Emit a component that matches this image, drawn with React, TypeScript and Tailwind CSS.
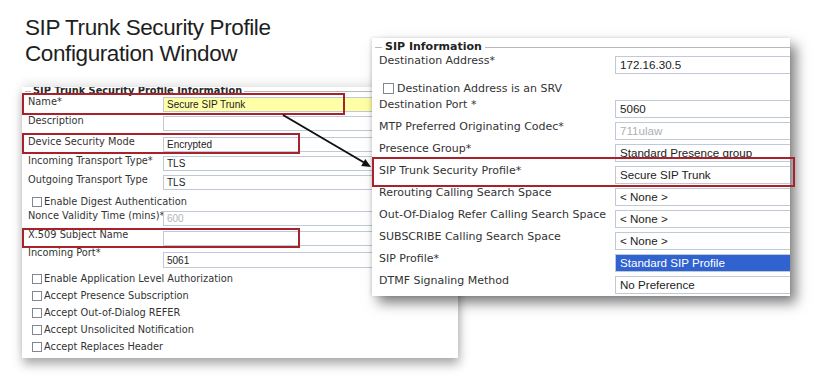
import React from "react";

type LeftRow =
  | { kind: "field"; label: string; value: string; row: string; box: string; text?: string }
  | { kind: "check"; label: string; row: string };

const leftRows: LeftRow[] = [
  { kind: "field", label: "Name*", value: "Secure SIP Trunk", row: "h-[19px]", box: "mt-[1px] h-[15px] bg-[#ffffa8]" },
  { kind: "field", label: "Description", value: "", row: "h-[21px]", box: "mt-[1px] h-[15px] bg-white" },
  { kind: "field", label: "Device Security Mode", value: "Encrypted", row: "h-[19px]", box: "mt-[1px] h-[15px] bg-white" },
  { kind: "field", label: "Incoming Transport Type*", value: "TLS", row: "h-[19px]", box: "mt-[1px] h-[15px] bg-white" },
  { kind: "field", label: "Outgoing Transport Type", value: "TLS", row: "h-[19px]", box: "mt-[1px] h-[15px] bg-white" },
  { kind: "check", label: "Enable Digest Authentication", row: "h-[17px]" },
  { kind: "field", label: "Nonce Validity Time (mins)*", value: "600", row: "h-[19px]", box: "mt-[1px] h-[15px] bg-white", text: "text-[#b4b4b4]" },
  { kind: "field", label: "X.509 Subject Name", value: "", row: "h-[18px]", box: "mt-[2px] h-[15px] bg-white" },
  { kind: "field", label: "Incoming Port*", value: "5061", row: "h-[23px]", box: "mt-[5px] h-[16px] bg-white" },
  { kind: "check", label: "Enable Application Level Authorization", row: "h-[17px]" },
  { kind: "check", label: "Accept Presence Subscription", row: "h-[17px]" },
  { kind: "check", label: "Accept Out-of-Dialog REFER", row: "h-[17px]" },
  { kind: "check", label: "Accept Unsolicited Notification", row: "h-[17px]" },
  { kind: "check", label: "Accept Replaces Header", row: "h-[17px]" },
];

type RightRow =
  | { kind: "field"; label: string; value: string; box?: string; text?: string }
  | { kind: "check"; label: string };

const rightRows: RightRow[] = [
  { kind: "field", label: "Destination Address*", value: "172.16.30.5" },
  { kind: "check", label: "Destination Address is an SRV" },
  { kind: "field", label: "Destination Port *", value: "5060" },
  { kind: "field", label: "MTP Preferred Originating Codec*", value: "711ulaw", text: "text-[#b0b0b0]" },
  { kind: "field", label: "Presence Group*", value: "Standard Presence group" },
  { kind: "field", label: "SIP Trunk Security Profile*", value: "Secure SIP Trunk" },
  { kind: "field", label: "Rerouting Calling Search Space", value: "< None >" },
  { kind: "field", label: "Out-Of-Dialog Refer Calling Search Space", value: "< None >" },
  { kind: "field", label: "SUBSCRIBE Calling Search Space", value: "< None >" },
  { kind: "field", label: "SIP Profile*", value: "Standard SIP Profile", box: "bg-[#3163d0]", text: "text-white" },
  { kind: "field", label: "DTMF Signaling Method", value: "No Preference" },
];

function Check(props: { size: string }) {
  return <span className={`inline-block shrink-0 ${props.size} border border-[#7d8894] bg-white`} />;
}

function LeftWindow() {
  return (
    <div className="absolute left-[22px] top-[87px] w-[436px] h-[271px] bg-white overflow-hidden shadow-[1px_6px_10px_rgba(0,0,0,0.35),0_-6px_8px_rgba(0,0,0,0.06)] font-['DejaVu_Sans',sans-serif] text-[#333]">
      <div className="flex items-center h-[12px] -mt-[2px] mb-[-1px]">
        <span className="w-[6px] ml-[3px] border-t border-[#b8b8b8]" />
        <span className="px-[2px] font-bold text-[9.8px] leading-[12px] text-[#2a2a2a]">
          SIP Trunk Security Profile Information
        </span>
        <span className="flex-1 border-t border-[#b8b8b8]" />
      </div>
      {leftRows.map((r) =>
        r.kind === "field" ? (
          <div key={r.label} className={`flex ${r.row}`}>
            <div className="w-[141px] shrink-0 pl-[6px] text-[9.8px] leading-[12px] whitespace-nowrap">{r.label}</div>
            <div
              className={`w-[300px] shrink-0 border border-[#bfcad6] pl-[3px] flex items-center font-['Liberation_Sans',sans-serif] text-[10px] ${r.box} ${r.text ?? "text-[#222]"}`}
            >
              {r.value}
            </div>
          </div>
        ) : (
          <div key={r.label} className={`flex items-center pl-[10px] gap-[2px] ${r.row}`}>
            <Check size="w-[10px] h-[10px]" />
            <span className="text-[9.8px] leading-[12px] whitespace-nowrap">{r.label}</span>
          </div>
        )
      )}
    </div>
  );
}

function RightWindow() {
  return (
    <div className="absolute left-[372px] top-[38px] w-[418px] h-[258px] bg-white overflow-hidden shadow-[6px_7px_12px_rgba(0,0,0,0.5),-1px_0_3px_rgba(0,0,0,0.12)] font-['DejaVu_Sans',sans-serif] text-[#333]">
      <div className="flex items-center h-[16px] pt-[2px]">
        <span className="w-[7px] ml-[3px] border-t border-[#b8b8b8]" />
        <span className="px-[3px] font-bold text-[11px] leading-[14px] text-[#222]">SIP Information</span>
        <span className="flex-1 border-t border-[#b8b8b8]" />
      </div>
      {rightRows.map((r) =>
        r.kind === "field" ? (
          <div key={r.label} className="flex h-[22px] pl-[7px]">
            <div className="w-[236px] shrink-0 text-[11px] leading-[14px] whitespace-nowrap">{r.label}</div>
            <div
              className={`mt-[2px] h-[18px] w-[200px] shrink-0 border border-[#bfcad6] pl-[4px] flex items-center font-['Liberation_Sans',sans-serif] text-[11.6px] ${r.box ?? "bg-white"} ${r.text ?? "text-[#222]"}`}
            >
              {r.value}
            </div>
          </div>
        ) : (
          <div key={r.label} className="flex items-center h-[22px] pt-[3px] pl-[11px] gap-[3px]">
            <Check size="w-[11px] h-[11px]" />
            <span className="text-[11px] leading-[14px] whitespace-nowrap">{r.label}</span>
          </div>
        )
      )}
    </div>
  );
}

function Arrow() {
  return (
    <svg className="absolute left-[280px] top-[110px]" width="95" height="62" viewBox="0 0 95 62">
      <line x1="3" y1="5" x2="84" y2="52.5" stroke="#111" strokeWidth="2" />
      <polygon points="91,57 85.3,49 81.2,55.9" fill="#111" />
    </svg>
  );
}

export default function App() {
  return (
    <div className="relative w-[816px] h-[380px] bg-white overflow-hidden">
      <div className="pt-[15px] pl-[25px] font-['Liberation_Sans',Arial,sans-serif] text-[22.5px] tracking-[-0.4px] leading-[26px] text-[#1e1e1e]">
        SIP Trunk Security Profile
        <br />
        Configuration Window
      </div>
      <LeftWindow />
      <div className="absolute left-[22px] top-[93px] w-[323px] h-[22px] border-2 border-[#a8222c]" />
      <div className="absolute left-[22px] top-[133px] w-[278px] h-[21px] border-2 border-[#a8222c]" />
      <div className="absolute left-[22px] top-[228px] w-[278px] h-[20px] border-2 border-[#a8222c]" />
      <RightWindow />
      <div className="absolute left-[372px] top-[157px] w-[423px] h-[30px] border-2 border-[#a8222c]" />
      <Arrow />
    </div>
  );
}
